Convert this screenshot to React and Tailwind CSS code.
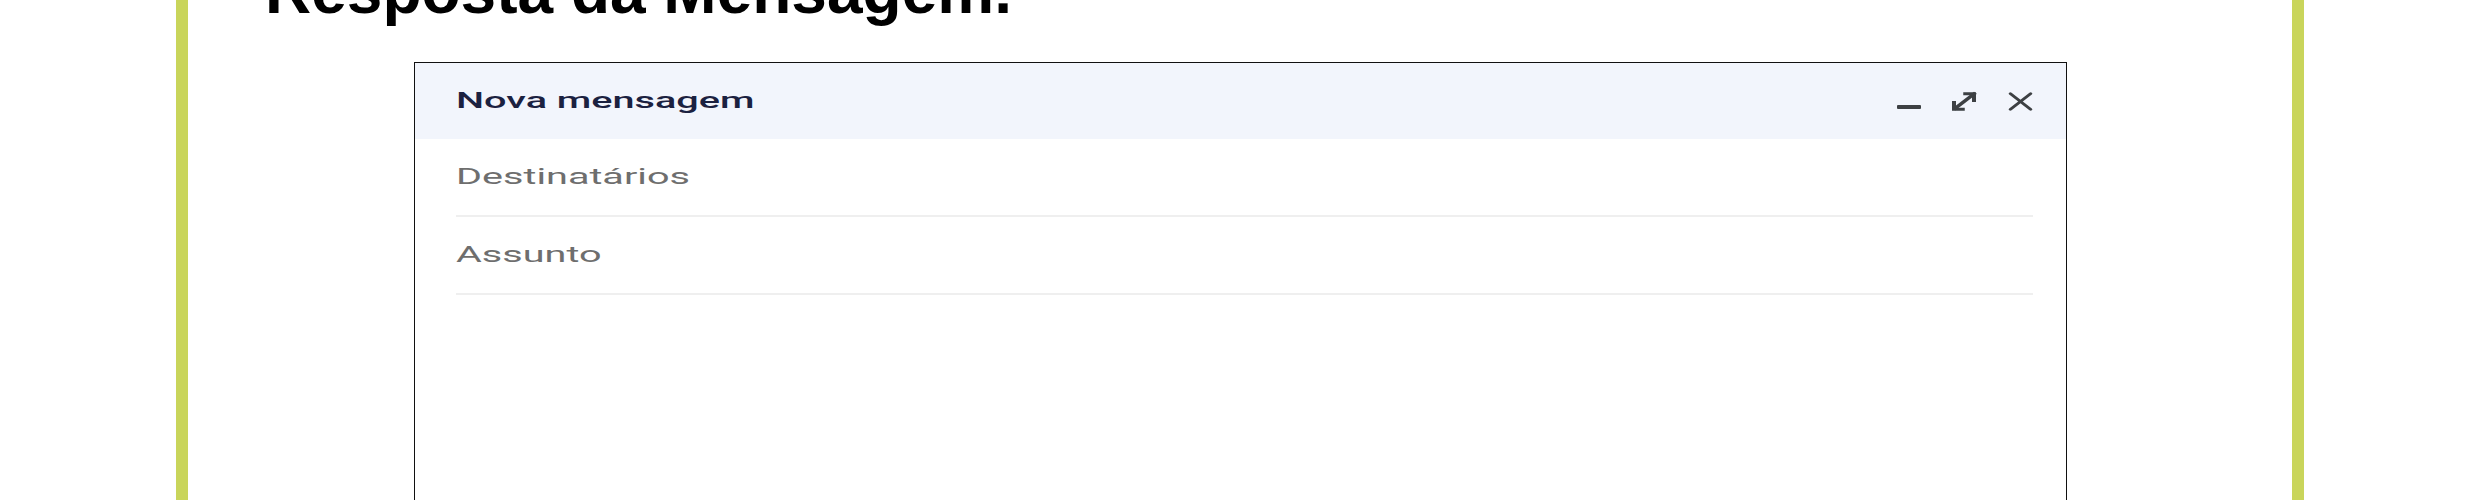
// App.jsx - "Resposta da Mensagem." section with a compose window preview

import React from 'react';

// Header icons of the compose window (the preview is stretched, so svgs don't keep aspect)
const MinimizeIcon = () => (
    <svg width="24" height="6" viewBox="0 0 24 6" preserveAspectRatio="none" className="mt-[12px]">
        <rect x="0" y="1" width="24" height="4" rx="1" fill="#3d4043" />
    </svg>
);

const ExpandIcon = () => (
    <svg width="30" height="23" viewBox="0 0 24 24" preserveAspectRatio="none" fill="none" stroke="#3d4043" strokeWidth="3.2" strokeLinecap="square">
        <path d="M13 4h7v7" />
        <path d="M20 4L5 19" />
        <path d="M4 13v7h7" />
    </svg>
);

const CloseIcon = () => (
    <svg width="27" height="21" viewBox="0 0 24 24" preserveAspectRatio="none" fill="none" stroke="#3d4043" strokeWidth="3" strokeLinecap="round">
        <path d="M3 3l18 18" />
        <path d="M21 3L3 21" />
    </svg>
);

// Stretched text, like the screenshot of the dialog in the original page
const Wide = ({ children, className }) => (
    <span className={`inline-block origin-left scale-x-[1.8] whitespace-nowrap ${className}`}>{children}</span>
);

const FieldRow = ({ label }) => (
    <div className="ml-[41px] mr-[33px] h-[78px] flex items-center border-b-2 border-[#efefef]">
        <Wide className="text-[22px] leading-none text-[#6e6e6e]">{label}</Wide>
    </div>
);

export default function App() {
    return (
        <div className="h-[500px] overflow-hidden bg-white">
            {/* flex-col so the title's negative margin doesn't collapse through the box */}
            <div className="mx-[176px] h-full flex flex-col border-x-[12px] border-[#c9d55b]">
                {/* Section title, cut off by the top of the view */}
                <h1 className="-mt-[41px] pl-[77px] text-[64px] leading-none font-bold text-black font-['Liberation_Sans',sans-serif] whitespace-nowrap">
                    Resposta da Mensagem.
                </h1>

                {/* Compose window */}
                <div className="mx-auto mt-[39px] w-[1653px] h-[600px] shrink-0 border border-[#111111] bg-white font-['Roboto',sans-serif]">
                    <div className="h-[76px] bg-[#f2f5fc] pl-[41px] pr-[32px] flex items-center justify-between">
                        <Wide className="text-[22px] leading-none font-medium text-[#1b2140]">Nova mensagem</Wide>
                        <div className="flex items-center gap-[28px]">
                            <MinimizeIcon />
                            <ExpandIcon />
                            <CloseIcon />
                        </div>
                    </div>
                    <FieldRow label="Destinatários" />
                    <FieldRow label="Assunto" />
                </div>
            </div>
        </div>
    );
}
